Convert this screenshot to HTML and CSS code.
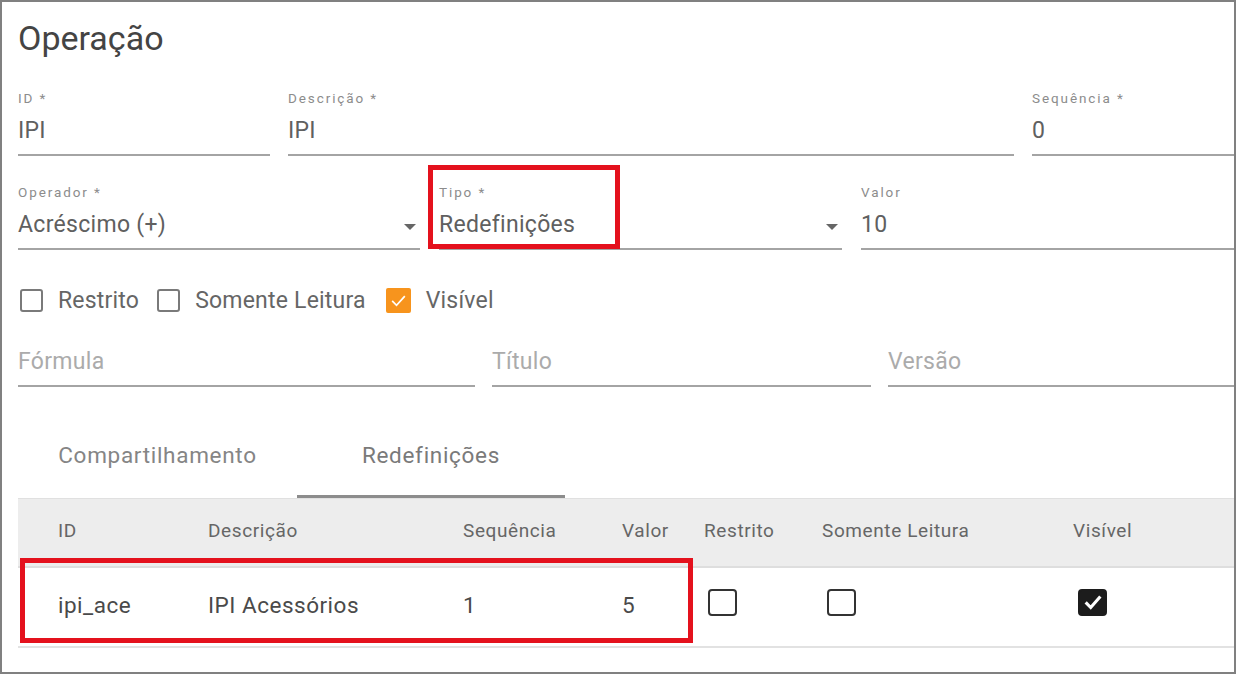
FILE: index.html
```html
<!DOCTYPE html>
<html lang="pt">

<head>
    <meta charset="UTF-8">
    <meta name="viewport" content="width=device-width, initial-scale=1.0">
    <title>Operação</title>
    <link rel="stylesheet" href="styles.css">
</head>

<body>
    <!-- the whole form sits inside a framed box -->
    <div class="frame">
        <h1 class="title">Operação</h1>

        <!-- first row: id, description, sequence -->
        <div class="row row-main">
            <div class="field">
                <span class="label">ID *</span>
                <div class="value">IPI</div>
            </div>
            <div class="field">
                <span class="label">Descrição *</span>
                <div class="value">IPI</div>
            </div>
            <div class="field">
                <span class="label">Sequência *</span>
                <div class="value">0</div>
            </div>
        </div>

        <!-- second row: operator, type, value -->
        <div class="row row-type">
            <div class="field">
                <span class="label">Operador *</span>
                <div class="value select">Acréscimo (+)<span class="caret"></span></div>
            </div>
            <div class="field marked">
                <span class="label">Tipo *</span>
                <div class="value select">Redefinições<span class="caret"></span></div>
                <div class="mark mark-type"></div>
            </div>
            <div class="field">
                <span class="label">Valor</span>
                <div class="value">10</div>
            </div>
        </div>

        <!-- flags -->
        <div class="checks">
            <label class="check"><span class="box"></span>Restrito</label>
            <label class="check"><span class="box"></span>Somente Leitura</label>
            <label class="check"><span class="box box-on">
                    <svg viewBox="0 0 24 24" width="19" height="19"><polyline points="4,12.5 9.5,18 20,6.5" fill="none" stroke="#fff" stroke-width="2.2"/></svg>
                </span>Visível</label>
        </div>

        <!-- empty fields -->
        <div class="row row-extra">
            <div class="field">
                <div class="value empty">Fórmula</div>
            </div>
            <div class="field">
                <div class="value empty">Título</div>
            </div>
            <div class="field">
                <div class="value empty">Versão</div>
            </div>
        </div>

        <!-- tabs -->
        <div class="tabs">
            <div class="tab">Compartilhamento</div>
            <div class="tab tab-active">Redefinições</div>
        </div>

        <!-- redefinitions list -->
        <div class="grid-wrap">
            <table class="grid">
                <thead>
                    <tr>
                        <th class="c-id">ID</th>
                        <th class="c-desc">Descrição</th>
                        <th class="c-seq">Sequência</th>
                        <th class="c-val">Valor</th>
                        <th class="c-res">Restrito</th>
                        <th class="c-ro">Somente Leitura</th>
                        <th>Visível</th>
                    </tr>
                </thead>
                <tbody>
                    <tr>
                        <td class="c-id">ipi_ace</td>
                        <td>IPI Acessórios</td>
                        <td>1</td>
                        <td>5</td>
                        <td><span class="cell-box cb-res"></span></td>
                        <td><span class="cell-box cb-ro"></span></td>
                        <td><span class="cell-box cb-vis box-dark">
                                <svg viewBox="0 0 24 24" width="22" height="22"><polyline points="4,12.5 9.5,18 20,6" fill="none" stroke="#fff" stroke-width="3.4"/></svg>
                            </span></td>
                    </tr>
                </tbody>
            </table>
            <div class="mark mark-row"></div>
        </div>
    </div>
</body>

</html>
```

FILE: styles.css
```css
/* page base */

html,
body {
    margin: 0;
    padding: 0;
    background: #fff;
    font-family: Roboto, "Noto Sans", sans-serif;
}

/* framed box round the form */

.frame {
    width: 1236px;
    height: 674px;
    box-sizing: border-box;
    border: 2px solid #808080;
    padding: 0 0 0 16px;
    overflow: hidden;
}

.title {
    margin: 16px 0 0 0;
    font-size: 34px;
    line-height: 40px;
    font-weight: 400;
    color: #444;
}

/* field rows */

.row {
    display: grid;
}

.row-main {
    grid-template-columns: 252px 726px 1fr;
    column-gap: 18px;
    margin-top: 32px;
}

.row-type {
    grid-template-columns: 402px 403px 1fr;
    column-gap: 19px;
    margin-top: 28px;
}

.row-extra {
    grid-template-columns: 457px 379px 1fr;
    column-gap: 17px;
    margin-top: 34px;
}

.field {
    display: flex;
    flex-direction: column;
    border-bottom: 2px solid #a4a4a4;
    padding-bottom: 8px;
}

.label {
    font-size: 13.5px;
    line-height: 16px;
    letter-spacing: 1.9px;
    color: #8c8c8c;
}

.value {
    margin-top: 10px;
    font-size: 23px;
    line-height: 30px;
    letter-spacing: 0.3px;
    color: #606060;
}

.value.empty {
    margin-top: 0;
    color: #ababab;
}

.select {
    display: flex;
    justify-content: space-between;
    align-items: center;
}

/* dropdown arrow */

.caret {
    width: 0;
    height: 0;
    margin: 4px 4px 0 0;
    border-left: 6px solid transparent;
    border-right: 6px solid transparent;
    border-top: 6px solid #666;
}

/* red highlight boxes */

.marked,
.grid-wrap {
    position: relative;
}

.mark {
    position: absolute;
    box-sizing: border-box;
    border: 5px solid #e4111d;
}

.mark-type {
    left: -11px;
    top: -19px;
    width: 192px;
    height: 84px;
}

.mark-row {
    left: 2px;
    top: 60px;
    width: 673px;
    height: 85px;
}

/* checkbox row */

.checks {
    display: flex;
    align-items: center;
    margin-top: 38px;
    height: 25px;
}

.check {
    display: flex;
    align-items: center;
    gap: 15px;
    margin-right: 16px;
    font-size: 23px;
    letter-spacing: 0.2px;
    color: #666;
}

.check:nth-child(2) {
    margin-right: 18px;
}

.box {
    width: 23px;
    height: 23px;
    box-sizing: border-box;
    border: 2px solid #7a7a7a;
    border-radius: 3px;
    margin-left: 2px;
    display: flex;
    align-items: center;
    justify-content: center;
}

.box-on {
    width: 25px;
    height: 25px;
    border-color: #f7941d;
    background: #f7941d;
    border-radius: 2px;
}

/* tabs */

.tabs {
    display: flex;
    margin-top: 51px;
}

.tab {
    padding: 2px 0 25px 0;
    line-height: 30px;
    font-size: 22.5px;
    letter-spacing: 0.7px;
    color: #858585;
    text-align: center;
    border-bottom: 3px solid transparent;
}

.tab:first-child {
    width: 279px;
}

.tab-active {
    width: 268px;
    color: #7a7a7a;
    border-bottom-color: #8c8c8c;
}

/* table */

.grid {
    width: 100%;
    border-collapse: collapse;
    table-layout: fixed;
}

.grid th {
    height: 62px;
    background: #ededed;
    border-top: 1px solid #e0e0e0;
    font-size: 19px;
    letter-spacing: 0.6px;
    font-weight: 400;
    color: #666;
    text-align: left;
    padding: 0 0 5px 0;
}

.grid td {
    height: 74px;
    font-size: 22.5px;
    letter-spacing: 0.5px;
    color: #4a4a4a;
    padding: 0 0 4px 0;
    border-top: 2px solid #dedede;
    border-bottom: 2px solid #e2e2e2;
}

.grid .c-id {
    width: 150px;
    padding-left: 40px;
}

.grid .c-desc {
    width: 255px;
}

.grid .c-seq {
    width: 159px;
}

.grid .c-val {
    width: 82px;
}

.grid .c-res {
    width: 118px;
}

.grid .c-ro {
    width: 251px;
}

.cell-box {
    width: 29px;
    height: 27px;
    box-sizing: border-box;
    border: 2.5px solid #333;
    border-radius: 4px;
    margin-bottom: 6px;
    display: flex;
    align-items: center;
    justify-content: center;
}

.cb-res {
    margin-left: 4px;
}

.cb-ro {
    margin-left: 5px;
}

.cb-vis {
    margin-left: 5px;
}

.box-dark {
    background: #1c1c1c;
    border-color: #1c1c1c;
}
```
